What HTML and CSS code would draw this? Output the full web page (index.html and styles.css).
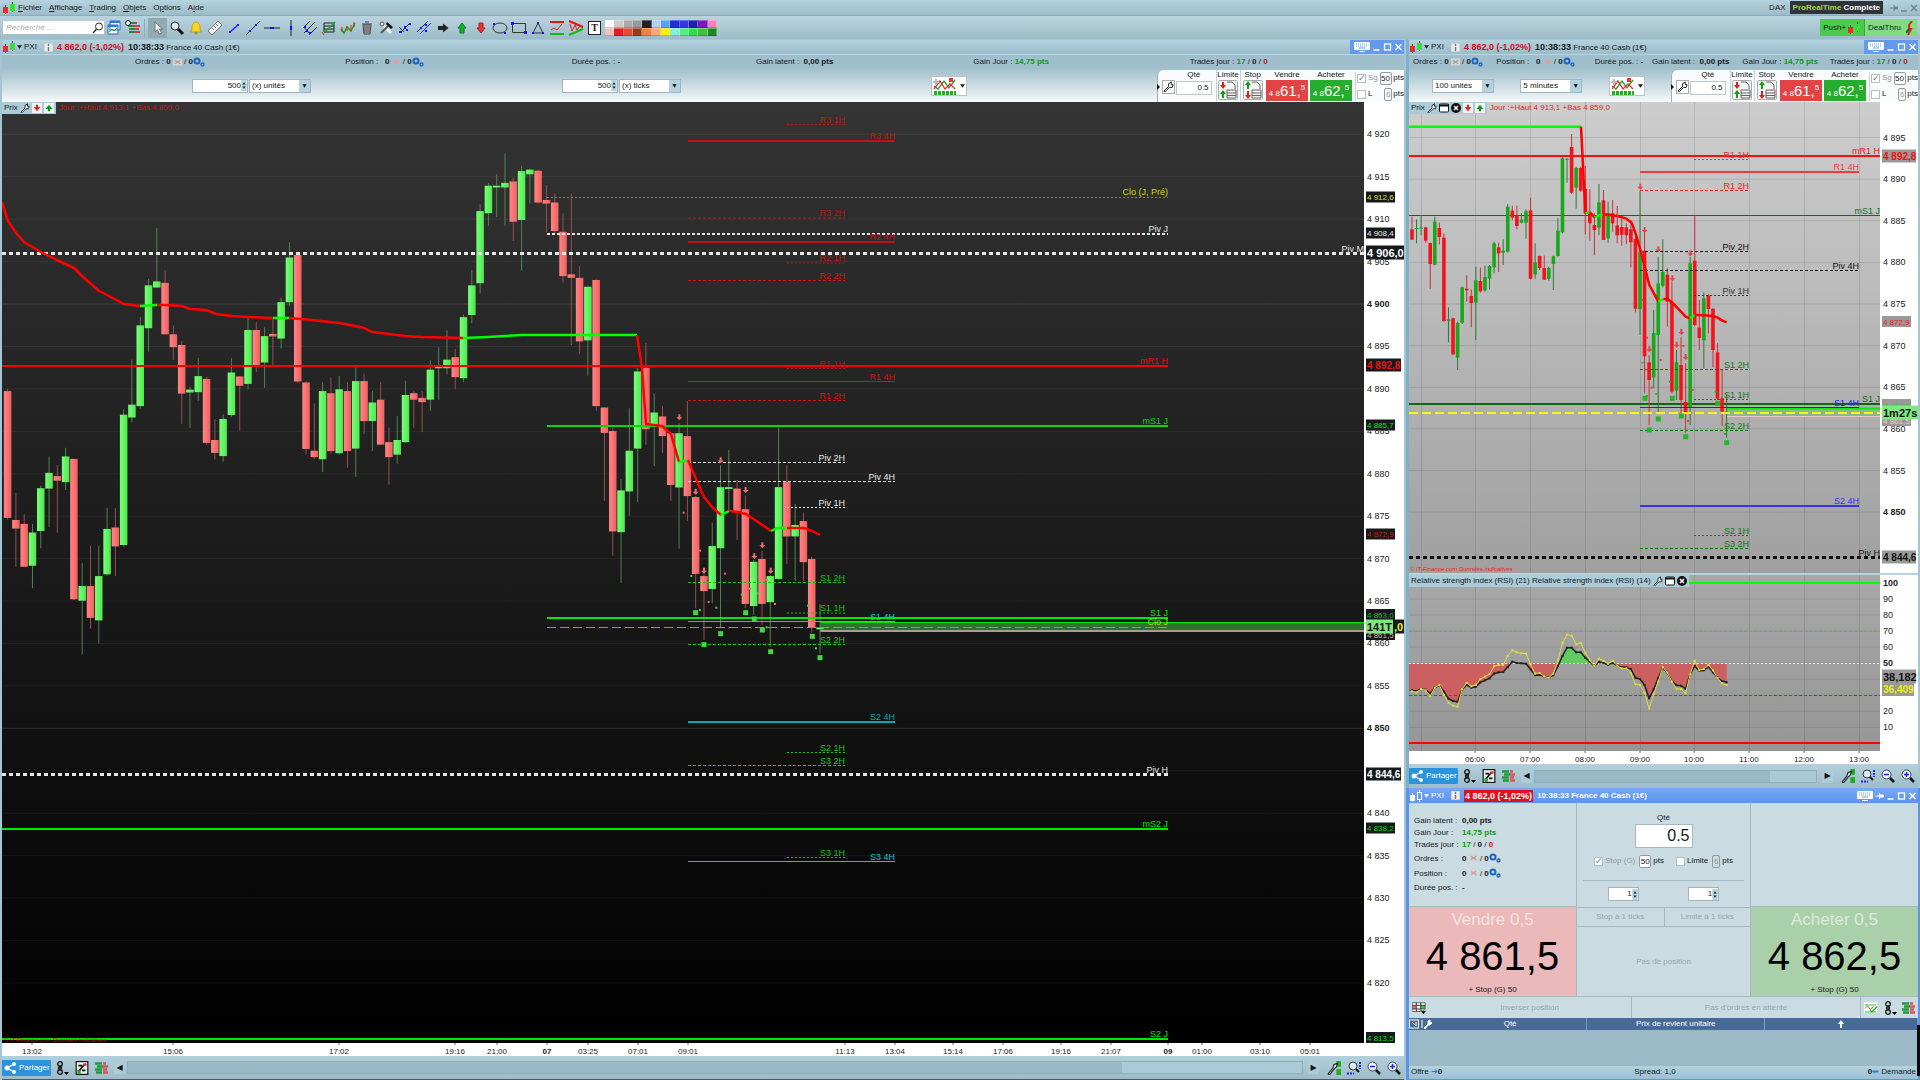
FILE: index.html
```html
<!DOCTYPE html>
<html lang="fr">
<head>
    <meta charset="UTF-8">
    <meta name="viewport" content="width=device-width, initial-scale=1.0">
    <title>ProRealTime Complete</title>
    <link rel="stylesheet" href="styles.css">
</head>
<body>
    <svg class="sprite" aria-hidden="true">
        <symbol id="candles" viewBox="0 0 14 12">
            <path d="M3.500 3v9M10.500 0v10" stroke="#345" fill="none"/>
            <rect x="1" y="5" width="5" height="6" fill="#e03030"/>
            <rect x="8" y="2" width="5" height="7" fill="#38e038"/>
        </symbol>
        <symbol id="candles-white" viewBox="0 0 14 12">
            <path d="M3.500 3v9M10.500 0v2M10.500 9v3" stroke="#fff" fill="none"/>
            <rect x="1" y="5" width="5" height="6" fill="#fff"/>
            <rect x="8.500" y="2.500" width="4" height="7" fill="none" stroke="#fff"/>
        </symbol>
        <symbol id="caret" viewBox="0 0 6 4"><path d="M0 0h6l-3 4z" fill="currentColor"/></symbol>
        <symbol id="info" viewBox="0 0 9 9">
            <rect width="9" height="9" fill="#eee" stroke="#bbb"/>
            <path d="M4.500 1v2M4.500 4v4" stroke="#777" stroke-width="1.500"/>
        </symbol>
        <symbol id="keyboard" viewBox="0 0 16 10">
            <rect width="16" height="8" rx="1" fill="#fff"/>
            <path d="M2 2h12M2 4h12" stroke="#6c9bea" stroke-dasharray="1 1"/>
            <path d="M5 6h6M6 9.500h4" stroke="#6c9bea"/><path d="M5 9.500h6" stroke="#fff"/>
        </symbol>
        <symbol id="min" viewBox="0 0 8 8"><path d="M1 7h6" stroke="currentColor" stroke-width="1.500"/></symbol>
        <symbol id="max" viewBox="0 0 8 8"><rect x="1" y="1" width="6" height="6" fill="none" stroke="currentColor" stroke-width="1.300"/></symbol>
        <symbol id="close" viewBox="0 0 8 8"><path d="M1 1l6 6M7 1l-6 6" stroke="currentColor" stroke-width="1.500"/></symbol>
        <symbol id="pin" viewBox="0 0 8 8"><path d="M0 4h4M4 1v6M4 3h4v2h-4" stroke="currentColor" fill="currentColor"/></symbol>
        <symbol id="cross" viewBox="0 0 10 8">
            <rect width="10" height="8" rx="1" fill="#d8d4d0"/>
            <path d="M2 2l6 4M8 2l-6 4" stroke="#a9a09b" stroke-width="1.500"/>
        </symbol>
        <symbol id="cross-red" viewBox="0 0 10 8"><path d="M2 2l6 4M8 2l-6 4" stroke="#e3a0a4" stroke-width="2"/></symbol>
        <symbol id="gears" viewBox="0 0 12 10">
            <circle cx="4" cy="4" r="2.500" fill="none" stroke="#1c63c8" stroke-width="2"/>
            <circle cx="9.500" cy="7.500" r="1.500" fill="none" stroke="#1c63c8" stroke-width="1.300"/>
        </symbol>
        <symbol id="wrench" viewBox="0 0 12 12">
            <path d="M1 11l5-5V3l3-2v3h2l-1 3H7l-5 5z" fill="#fff" stroke="#111"/>
        </symbol>
        <symbol id="indicators" viewBox="0 0 24 18">
            <rect width="24" height="18" fill="#fff"/>
            <path d="M1 9l4 3 6-8 5 7 6-8" stroke="#2a9a2a" stroke-width="1.300" fill="none"/>
            <path d="M1 12l6-8 5 8 5-5 5 5" stroke="#d33" stroke-width="1.300" fill="none"/>
            <path d="M1 16h22" stroke="#1db31d" stroke-width="4" stroke-dasharray="3 1"/>
            <path d="M16 1h4v4h-4z" fill="#e33"/><path d="M3 2v6M0 5h6" stroke="#bbb" stroke-width="2"/>
        </symbol>
        <symbol id="order-limit" viewBox="0 0 20 20">
            <rect x=".5" y=".5" width="19" height="19" rx="1" fill="#f4f4f4" stroke="#aaa"/>
            <path d="M9 2h5l3 3v4M9 10h9v8h-9zM9 13h9M9 15.500h9" fill="none" stroke="#666"/>
            <path d="M4 2h2v3h2l-3 4-3-4h2z" fill="#e02020"/><path d="M4 18h2v-4h2l-3-4-3 4h2z" fill="#12a012"/>
        </symbol>
        <symbol id="order-stop" viewBox="0 0 20 20">
            <rect x=".5" y=".5" width="19" height="19" rx="1" fill="#f4f4f4" stroke="#aaa"/>
            <path d="M9 2h5l3 3v4M9 10h9v8h-9zM9 13h9M9 15.500h9" fill="none" stroke="#666"/>
            <path d="M4 9h2V5h2L5 1 2 5h2z" fill="#12a012"/><path d="M4 11h2v4h2l-3 4-3-4h2z" fill="#e02020"/>
        </symbol>
        <symbol id="down-box" viewBox="0 0 9 9"><rect width="9" height="9" fill="#f2f2f2"/><path d="M3.500 1.500h2v2H7.500l-3 4-3-4h2z" fill="#e22"/></symbol>
        <symbol id="up-box" viewBox="0 0 9 9"><rect width="9" height="9" fill="#f2f2f2"/><path d="M3.500 7.500h2v-2h2l-3-4-3 4h2z" fill="#0a9a1a"/></symbol>
        <symbol id="window" viewBox="0 0 10 9"><rect x=".5" y=".5" width="9" height="8" rx="1" fill="#fff" stroke="#111"/><path d="M0 2h10" stroke="#111" stroke-width="2"/></symbol>
        <symbol id="kill" viewBox="0 0 10 10"><circle cx="5" cy="5" r="5" fill="#111"/><path d="M3 3l4 4M7 3l-4 4" stroke="#fff" stroke-width="1.500"/></symbol>
        <symbol id="share" viewBox="0 0 12 12"><path d="M10 2L3 6l7 4" fill="none" stroke="#fff" stroke-width="1.300"/><g fill="#fff"><circle cx="10" cy="2" r="2"/><circle cx="3" cy="6" r="2.500"/><circle cx="10" cy="10" r="2"/></g></symbol>
        <symbol id="chain" viewBox="0 0 14 14">
            <path d="M5 4v6" stroke="#111"/><g fill="none" stroke="#111" stroke-width="1.300"><circle cx="5" cy="3" r="2.300"/><circle cx="5" cy="11" r="2.300"/><circle cx="5" cy="7" r="1.500"/></g>
            <path d="M9 11h5l-2.500 3z"/>
        </symbol>
        <symbol id="note" viewBox="0 0 12 12"><rect x="1" y=".5" width="10" height="11" fill="#eee" stroke="#111"/><path d="M3 9l5-6M3 4h3M6 8h3" stroke="#111" stroke-width="1.500"/><path d="M7 2h3v2H7z" fill="#d33"/><path d="M2 8h3v3H2z" fill="#2a2"/></symbol>
        <symbol id="book" viewBox="0 0 14 12">
            <path d="M0 1.500h7M2 4.500h6M0 7.500h7M1 10.500h6" stroke="#1f9a3a" stroke-width="2.500"/>
            <path d="M8 1.500h3M8 4.500h5M8 7.500h4M8 10.500h5" stroke="#e0505a" stroke-width="2.500"/>
        </symbol>
        <symbol id="tool-chart" viewBox="0 0 12 12"><rect x="8" width="4" height="5" fill="#2a2"/><rect x="8" y="7" width="4" height="5" fill="#2a2"/><path d="M1 11l4-5 1-3 3-1-1 3-2 2-4 5z" fill="#eee" stroke="#222"/></symbol>
        <symbol id="zoom-fit" viewBox="0 0 14 14"><circle cx="6" cy="5" r="4" fill="#dceef5" stroke="#333"/><path d="M9 8l3 3" stroke="#111" stroke-width="2"/><path d="M0 12.500h7M13 1v7" stroke="#22e" stroke-width="2" stroke-dasharray="2 1"/></symbol>
        <symbol id="zoom-out" viewBox="0 0 14 14"><circle cx="5.500" cy="5.500" r="4.500" fill="#e6f4fa" stroke="#444"/><path d="M3 5.500h5" stroke="#22e" stroke-width="1.500"/><path d="M9 9l4 4" stroke="#111" stroke-width="2.500"/></symbol>
        <symbol id="zoom-in" viewBox="0 0 14 14"><circle cx="5.500" cy="5.500" r="4.500" fill="#e6f4fa" stroke="#444"/><path d="M3 5.500h5M5.500 3v5" stroke="#22e" stroke-width="1.500"/><path d="M9 9l4 4" stroke="#111" stroke-width="2.500"/></symbol>
        <symbol id="grid" viewBox="0 0 16 14">
            <g stroke="#333" stroke-width=".8"><path d="M0 1h5v3H0zM5 1h5v3H5zM10 1h5v3h-5zM0 8h5v3H0zM5 8h5v3H5z" fill="#fff"/><path d="M0 4h5v4H0z" fill="#e66"/><path d="M5 4h5v4H5z" fill="#eee"/><path d="M10 4h5v4h-5z" fill="#3c3"/></g>
            <path d="M10 10h6l-3 4z"/>
        </symbol>
        <symbol id="wave" viewBox="0 0 16 13"><rect width="15" height="12" fill="#fff"/><path d="M1 7l3-3 3 4 4-3" stroke="#d33" fill="none"/><path d="M1 3h13M1 11h13" stroke="#1b1"/><path d="M7 9l2 2 6-6" stroke="#1b1" stroke-width="1.500" fill="none"/></symbol>
        <symbol id="spin" viewBox="0 0 5 10"><rect width="5" height="10" fill="#b9d3de"/><path d="M1 4l1.500-2L4 4zM1 6l1.500 2L4 6z" fill="#123"/></symbol>
    </svg>

    <header>
        <nav class="menubar">
            <svg class="app-icon"><use href="#candles"/></svg>
            <a href="#"><u>F</u>ichier</a>
            <a href="#"><u>A</u>ffichage</a>
            <a href="#"><u>T</u>rading</a>
            <a href="#"><u>O</u>bjets</a>
            <a href="#">O<u>p</u>tions</a>
            <a href="#">A<u>i</u>de</a>
            <span class="account">DAX</span>
            <span class="brand"><em>ProRealTime</em> Complete</span>
            <span class="app-controls">
                <svg><use href="#pin"/></svg>
                <svg><use href="#min"/></svg>
                <svg><use href="#close"/></svg>
            </span>
        </nav>

        <div class="toolbar">
            <label class="search">
                <input type="search" placeholder="Recherche ..." aria-label="Recherche">
                <svg viewBox="0 0 12 12"><circle cx="7" cy="4.500" r="3.500" fill="none" stroke="#333"/><path d="M4.500 7L1 11" stroke="#333" stroke-width="1.500"/></svg>
            </label>
            <div class="tools">
                <button aria-label="Fenêtres"><svg viewBox="0 0 16 16"><path d="M4 1h10v9H4zM2 5h10v9H2z" fill="#fff" stroke="#2a62c4"/><path d="M4 2h10M2 6h10" stroke="#2a7be0" stroke-width="2"/><path d="M3 12l3-3 2 2 3-3" stroke="#1a1" fill="none"/></svg></button>
                <button aria-label="Carnet"><svg viewBox="0 0 16 16"><path d="M4 3h5M3 6h6M4 9h5M4 12h5" stroke="#1f8a3a" stroke-width="2"/><path d="M9 3h3M9 6h6M9 9h5M9 12h6" stroke="#c9404a" stroke-width="2"/><circle cx="3" cy="3" r="2.500" fill="#eee" stroke="#222"/></svg></button>
                <span class="divider"></span>
                <button class="pressed" aria-label="Curseur"><svg viewBox="0 0 16 16"><path d="M5 2v10l2.500-2 2 4 2-1-2-4h3z" fill="#eee" stroke="#777"/></svg></button>
                <button aria-label="Zoom"><svg viewBox="0 0 16 16"><circle cx="6" cy="6" r="4" fill="#dceef5" stroke="#222"/><path d="M9 9l5 5" stroke="#111" stroke-width="3"/></svg></button>
                <button aria-label="Alerte"><svg viewBox="0 0 16 16"><path d="M2 12c2-1 2-3 2-5 0-3 2-5 4-5s4 2 4 5c0 2 0 4 2 5z" fill="#f7d81e" stroke="#b08a10" stroke-width=".7"/><circle cx="8" cy="13" r="1.500" fill="#b08a10"/></svg></button>
                <button aria-label="Règle"><svg viewBox="0 0 16 16"><path d="M1 11L11 1l4 4L5 15z" fill="#f6f6f6" stroke="#777"/><path d="M5 8l2 2M7 6l2 2M9 4l2 2" stroke="#777"/></svg></button>
                <button aria-label="Segment"><svg viewBox="0 0 16 16"><path d="M4 12l8-7" stroke="#22f" stroke-width="1.500"/><path d="M3 11h2v2H3zM11 4h2v2h-2z" fill="#11f"/></svg></button>
                <button aria-label="Droite"><svg viewBox="0 0 16 16"><path d="M1 15L15 1" stroke="#222"/><path d="M4 10h2v2H4zM10 4h2v2h-2z" fill="#11f"/></svg></button>
                <button aria-label="Horizontale"><svg viewBox="0 0 16 16"><path d="M0 8h16" stroke="#222"/><path d="M6 7h4v2H6z" fill="#11f"/></svg></button>
                <button aria-label="Verticale"><svg viewBox="0 0 16 16"><path d="M8 0v16" stroke="#222"/><path d="M7 6h2v4H7z" fill="#11f"/></svg></button>
                <button aria-label="Fourche"><svg viewBox="0 0 16 16"><path d="M1 8l7-7M2 13L13 2M7 15l8-8M2 7l6 7" stroke="#222"/><path d="M2 6h2v2H2zM4 10h2v2H4zM7 12h2v2H7z" fill="#11f"/></svg></button>
                <button aria-label="Fibonacci"><svg viewBox="0 0 16 16"><path d="M3 3h10v9H3zM3 6h10M3 9h10" stroke="#222" fill="none"/><path d="M3 13L14 2" stroke="#1a1" stroke-width="1.500"/><path d="M1 12l2 3" stroke="#d22"/></svg></button>
                <button aria-label="Vagues"><svg viewBox="0 0 16 16"><path d="M1 9l3 4 3-6 4 4 4-8" fill="none" stroke="#1a1" stroke-width="1.500"/><path d="M2 7v5M7 6v5M11 5v6M14 2v5" stroke="#d22"/></svg></button>
                <button aria-label="Corbeille"><svg viewBox="0 0 16 16"><path d="M4 5h8l-1 9H5z" fill="#bbb" stroke="#444"/><path d="M3 4h10M6 2h4M6 6v7M8 6v7M10 6v7" stroke="#444"/></svg></button>
                <button aria-label="Outils"><svg viewBox="0 0 16 16"><path d="M3 3l10 10" stroke="#eee" stroke-width="3"/><path d="M3 13l8-8" stroke="#555" stroke-width="2"/><path d="M9 2l6 5-2 2-5-5z" fill="#111"/><circle cx="4" cy="4" r="2" fill="#ddd" stroke="#555"/></svg></button>
                <button aria-label="Dupliquer"><svg viewBox="0 0 16 16"><path d="M2 7l5 5M4 12l9-9" stroke="#222"/><path d="M2 11h3v2H2zM7 6h2v3H7zM12 3h2v2h-2zM9 9h2v2H9z" fill="#11f"/></svg></button>
                <button aria-label="Parallèle"><svg viewBox="0 0 16 16"><path d="M1 12L12 1" stroke="#222"/><path d="M4 14L15 3" stroke="#22f"/><path d="M4 7h2v2H4zM9 10h2v2H9zM9 4h2v2H9z" fill="#11f"/></svg></button>
                <button aria-label="Droite"><svg viewBox="0 0 16 16"><path d="M3 6h5V3.500l5.500 4.500L8 12.500V10H3z" fill="#222"/></svg></button>
                <button aria-label="Haut"><svg viewBox="0 0 16 16"><path d="M6 13V8H4l4-5 4 5h-2v5z" fill="#15b52a" stroke="#0a7a18"/></svg></button>
                <button aria-label="Bas"><svg viewBox="0 0 16 16"><path d="M6 3v5H4l4 5 4-5h-2V3z" fill="#ee3535" stroke="#b01818"/></svg></button>
                <button aria-label="Ellipse"><svg viewBox="0 0 16 16"><ellipse cx="8" cy="8" rx="7" ry="5" fill="none" stroke="#333"/><path d="M1 3h2v2H1zM12 12h2v2h-2z" fill="#11f"/></svg></button>
                <button aria-label="Rectangle"><svg viewBox="0 0 16 16"><path d="M1.500 3.500h13v9h-13z" fill="none" stroke="#333"/><path d="M0 2h3v3H0zM13 11h3v3h-3z" fill="#11f"/></svg></button>
                <button aria-label="Triangle"><svg viewBox="0 0 16 16"><path d="M8 3L3 13h10z" fill="none" stroke="#333"/><path d="M7 2h2v2H7zM2 12h2v2H2zM12 12h2v2h-2z" fill="#11f"/></svg></button>
                <button aria-label="Range"><svg viewBox="0 0 16 16"><path d="M1 2h14" stroke="#e11" stroke-width="2"/><path d="M1 14h14" stroke="#1b1" stroke-width="2"/><path d="M2 10l3-2 3 2 5-6" fill="none" stroke="#d22"/></svg></button>
                <button aria-label="Figures"><svg viewBox="0 0 16 16"><path d="M1 1l14 6" stroke="#e11" stroke-width="2"/><path d="M1 15l14-6" stroke="#1b1" stroke-width="2"/><path d="M2 4l2 7 3-6 2 5 3-4 3 2" fill="none" stroke="#d22"/></svg></button>
                <button class="text-tool" aria-label="Texte">T</button>
            </div>
            <div class="palette" id="palette"></div>
            <button class="push">Push+ <svg><use href="#candles"/></svg></button>
            <button class="dealthru">DealThru <svg viewBox="0 0 8 14"><path d="M6 0L3 4v4h2L2 14" fill="none" stroke="#d22" stroke-width="2"/><path d="M3 8L0 12" stroke="#161" stroke-width="2"/></svg></button>
        </div>
    </header>

    <main>
        <section class="window main-window">
            <div class="titlebar">
                <svg class="app-icon"><use href="#candles"/></svg>
                <svg class="caret"><use href="#caret"/></svg>
                <span>PXI</span>
                <svg class="info"><use href="#info"/></svg>
                <b class="loss">4 862,0 (-1,02%)</b>
                <span><b>10:38:33</b> France 40 Cash (1€)</span>
                <span class="controls"><svg class="kb"><use href="#keyboard"/></svg><svg><use href="#min"/></svg><svg><use href="#max"/></svg><svg><use href="#close"/></svg></span>
            </div>
            <div class="stats">
                <span>Ordres : <b>0</b> <svg class="x"><use href="#cross"/></svg> / <b>0</b><svg class="gear"><use href="#gears"/></svg></span>
                <span>Position : &nbsp; <b>0</b> <svg class="x"><use href="#cross-red"/></svg> / <b>0</b><svg class="gear"><use href="#gears"/></svg></span>
                <span>Durée pos. : <b>-</b></span>
                <span>Gain latent : &nbsp;<b>0,00 pts</b></span>
                <span>Gain Jour : <b class="gain">14,75 pts</b></span>
                <span>Trades jour : <b class="gain">17</b> / <b>0</b> / <b class="loss">0</b></span>
            </div>
            <div class="settings">
                <div class="setting">
                    <span class="number"><input type="number" value="500" aria-label="Nombre d'unités"><svg><use href="#spin"/></svg></span>
                    <span class="select"><select aria-label="Unités"><option>(x) unités</option></select></span>
                </div>
                <div class="setting">
                    <span class="number"><input type="number" value="500" aria-label="Nombre de ticks"><svg><use href="#spin"/></svg></span>
                    <span class="select"><select aria-label="Période"><option>(x) ticks</option></select></span>
                </div>
                <button class="indicator" aria-label="Indicateurs"><svg class="ind"><use href="#indicators"/></svg><svg class="caret"><use href="#caret"/></svg></button>
                <div class="trade">
                    <button class="tool" aria-label="Réglages"><svg><use href="#wrench"/></svg></button>
                    <label class="col qty">Qté<input type="text" value="0.5"></label>
                    <button class="col order">Limite<svg><use href="#order-limit"/></svg></button>
                    <button class="col order">Stop<svg><use href="#order-stop"/></svg></button>
                    <button class="col deal">Vendre<span class="sell"><small>4 8</small>61,<sup>5</sup></span></button>
                    <button class="col deal">Acheter<span class="buy"><small>4 8</small>62,<sup>5</sup></span></button>
                    <div class="limits">
                        <div><label class="muted"><input type="checkbox" checked disabled>Sg</label><input type="text" value="50" aria-label="Stop pts">pts</div>
                        <div><label><input type="checkbox">L</label><input type="text" value="6" disabled aria-label="Limite pts">pts</div>
                    </div>
                </div>
            </div>
            <div class="chart">
                <svg id="mainChart"></svg>
                <div class="legend"><span class="legend-bar">Prix <svg><use href="#wrench"/></svg><svg><use href="#down-box"/></svg><svg><use href="#up-box"/></svg></span><span class="dayrange">Jour :+Haut 4 913,1 +Bas 4 859,0</span></div>
            </div>
            <div class="bottombar">
                <button class="share"><svg><use href="#share"/></svg>Partager</button>
                <svg class="ico"><use href="#chain"/></svg>
                <svg class="ico"><use href="#note"/></svg>
                <svg class="ico"><use href="#book"/></svg>
                <button class="scroll-btn">&#9664;</button>
                <div class="track"><div class="thumb thumb-wide"></div></div>
                <button class="scroll-btn">&#9654;</button>
                <svg class="ico"><use href="#tool-chart"/></svg>
                <svg class="ico"><use href="#zoom-fit"/></svg>
                <svg class="ico"><use href="#zoom-out"/></svg>
                <svg class="ico"><use href="#zoom-in"/></svg>
            </div>
        </section>

        <div class="side">
            <section class="window side-window">
                <div class="titlebar">
                    <svg class="app-icon"><use href="#candles"/></svg>
                    <svg class="caret"><use href="#caret"/></svg>
                    <span>PXI</span>
                    <svg class="info"><use href="#info"/></svg>
                    <b class="loss">4 862,0 (-1,02%)</b>
                    <span><b>10:38:33</b> France 40 Cash (1€)</span>
                    <span class="controls"><svg class="kb"><use href="#keyboard"/></svg><svg><use href="#min"/></svg><svg><use href="#max"/></svg><svg><use href="#close"/></svg></span>
                </div>
                <div class="stats">
                    <span>Ordres : <b>0</b> <svg class="x"><use href="#cross"/></svg> / <b>0</b><svg class="gear"><use href="#gears"/></svg></span>
                    <span>Position : &nbsp; <b>0</b> <svg class="x"><use href="#cross-red"/></svg> / <b>0</b><svg class="gear"><use href="#gears"/></svg></span>
                    <span>Durée pos. : <b>-</b></span>
                    <span>Gain latent : &nbsp;<b>0,00 pts</b></span>
                    <span>Gain Jour : <b class="gain">14,75 pts</b></span>
                    <span>Trades jour : <b class="gain">17</b> / <b>0</b> / <b class="loss">0</b></span>
                </div>
                <div class="settings">
                    <span class="select"><select aria-label="Unités"><option>100 unités</option></select></span>
                    <span class="select"><select aria-label="Période"><option>5 minutes</option></select></span>
                    <button class="indicator" aria-label="Indicateurs"><svg class="ind"><use href="#indicators"/></svg><svg class="caret"><use href="#caret"/></svg></button>
                    <div class="trade">
                        <button class="tool" aria-label="Réglages"><svg><use href="#wrench"/></svg></button>
                        <label class="col qty">Qté<input type="text" value="0.5"></label>
                        <button class="col order">Limite<svg><use href="#order-limit"/></svg></button>
                        <button class="col order">Stop<svg><use href="#order-stop"/></svg></button>
                        <button class="col deal">Vendre<span class="sell"><small>4 8</small>61,<sup>5</sup></span></button>
                        <button class="col deal">Acheter<span class="buy"><small>4 8</small>62,<sup>5</sup></span></button>
                        <div class="limits">
                            <div><label class="muted"><input type="checkbox" checked disabled>Sg</label><input type="text" value="50" aria-label="Stop pts">pts</div>
                            <div><label><input type="checkbox">L</label><input type="text" value="6" disabled aria-label="Limite pts">pts</div>
                        </div>
                    </div>
                </div>
                <div class="chart">
                    <svg id="sideChart"></svg>
                    <div class="legend"><span class="legend-bar">Prix <svg><use href="#wrench"/></svg><svg><use href="#window"/></svg><svg><use href="#kill"/></svg><svg><use href="#down-box"/></svg><svg><use href="#up-box"/></svg></span><span class="dayrange">Jour :+Haut 4 913,1 +Bas 4 859,0</span></div>
                </div>
                <div class="chart rsi">
                    <svg id="rsiChart"></svg>
                    <div class="legend"><span class="legend-bar">Relative strength index (RSI) (21) Relative strength index (RSI) (14) <svg><use href="#wrench"/></svg><svg><use href="#window"/></svg><svg><use href="#kill"/></svg></span></div>
                </div>
                <div class="bottombar">
                    <button class="share"><svg><use href="#share"/></svg>Partager</button>
                    <svg class="ico"><use href="#chain"/></svg>
                    <svg class="ico"><use href="#note"/></svg>
                    <svg class="ico"><use href="#book"/></svg>
                    <button class="scroll-btn">&#9664;</button>
                    <div class="track"><div class="thumb"></div></div>
                    <button class="scroll-btn">&#9654;</button>
                    <svg class="ico"><use href="#tool-chart"/></svg>
                    <svg class="ico"><use href="#zoom-fit"/></svg>
                    <svg class="ico"><use href="#zoom-out"/></svg>
                    <svg class="ico"><use href="#zoom-in"/></svg>
                </div>
            </section>

            <section class="window ticket">
                <div class="titlebar">
                    <svg class="app-icon"><use href="#candles-white"/></svg>
                    <svg class="caret"><use href="#caret"/></svg>
                    <span>PXI</span>
                    <svg class="info"><use href="#info"/></svg>
                    <b class="price-flag">4 862,0 (-1,02%)</b>
                    <strong>10:38:33 France 40 Cash (1€)</strong>
                    <span class="controls"><svg class="kb"><use href="#keyboard"/></svg><svg><use href="#pin"/></svg><svg><use href="#min"/></svg><svg><use href="#max"/></svg><svg><use href="#close"/></svg></span>
                </div>
                <div class="ticket-grid">
                    <dl class="summary">
                        <dt>Gain latent :</dt><dd><b>0,00 pts</b></dd>
                        <dt>Gain Jour :</dt><dd><b class="gain">14,75 pts</b></dd>
                        <dt>Trades jour :</dt><dd><b class="gain">17</b> / <b>0</b> / <b class="loss">0</b></dd>
                        <dt>Ordres :</dt><dd><b>0</b> <svg class="x"><use href="#cross"/></svg> / <b>0</b><svg class="gear"><use href="#gears"/></svg></dd>
                        <dt>Position :</dt><dd><b>0</b> <svg class="x"><use href="#cross-red"/></svg> / <b>0</b><svg class="gear"><use href="#gears"/></svg></dd>
                        <dt>Durée pos. :</dt><dd><b>-</b></dd>
                    </dl>
                    <div class="quantity">
                        <label class="big-qty">Qté<input type="text" value="0.5"></label>
                        <div class="protect">
                            <label class="muted"><input type="checkbox" checked disabled>Stop (G)</label><input type="text" value="50" aria-label="Stop pts">pts
                            <label class="limit"><input type="checkbox">Limite</label><input type="text" value="6" disabled aria-label="Limite pts">pts
                        </div>
                        <div class="offsets">
                            <span class="number"><input type="number" value="1" aria-label="Ticks stop"><svg><use href="#spin"/></svg></span>
                            <span class="number"><input type="number" value="1" aria-label="Ticks limite"><svg><use href="#spin"/></svg></span>
                        </div>
                    </div>
                    <div class="blank"></div>
                    <button class="quote quote-sell"><span>Vendre 0,5</span><strong>4 861,5</strong><small>+ Stop (G) 50</small></button>
                    <div class="middle">
                        <button disabled>Stop à 1 ticks</button>
                        <button disabled>Limite à 1 ticks</button>
                        <p>Pas de position</p>
                    </div>
                    <button class="quote quote-buy"><span>Acheter 0,5</span><strong>4 862,5</strong><small>+ Stop (G) 50</small></button>
                </div>
                <div class="actions">
                    <svg class="ico"><use href="#grid"/></svg>
                    <button class="invert" disabled>Inverser position</button>
                    <button disabled>Pas d'ordres en attente</button>
                    <svg class="ico"><use href="#wave"/></svg>
                    <svg class="ico"><use href="#chain"/></svg>
                    <svg class="ico"><use href="#book"/></svg>
                </div>
                <table>
                    <thead>
                        <tr>
                            <th class="th-icons"><svg viewBox="0 0 24 10"><rect x=".5" y="1" width="9" height="8" fill="none" stroke="#fff"/><path d="M3 3l4 4M7 3v4M13 1v8M15 9l4-4V2l2-1v2l2 1-2 2h-2l-3 4z" stroke="#fff" fill="#fff"/></svg></th>
                            <th>Qté</th>
                            <th class="th-price">Prix de revient unitaire</th>
                            <th><svg class="up" viewBox="0 0 6 8"><path d="M2 8V4H0l3-4 3 4H4v4z" fill="#fff"/></svg></th>
                        </tr>
                    </thead>
                </table>
                <div class="depth"></div>
                <footer>
                    <span>Offre <i>&#10132;</i><b>0</b></span>
                    <span>Spread: 1,0</span>
                    <span><b>0</b><i>&#11013;</i> Demande</span>
                </footer>
            </section>
        </div>
    </main>
    <script src="script.js"></script>
</body>
</html>
```

FILE: styles.css
```css
* {
    box-sizing: border-box;
}

body {
    margin: 0;
    height: 100vh;
    display: flex;
    flex-direction: column;
    overflow: hidden;
    background: #9cbccb;
    color: #15181a;
    font: 8px/12px "Liberation Sans", Arial, sans-serif;
}

button, input, select {
    font: inherit;
    color: inherit;
    margin: 0;
    padding: 0;
    border: 0;
    border-radius: 0;
    background: none;
}

svg {
    display: block;
    flex: none;
}

a {
    color: inherit;
    text-decoration: none;
}

.sprite {
    position: absolute;
    width: 0;
    height: 0;
}

.gain { color: #0a9d12; }
.loss { color: #d8091c; }
.muted { color: #8e9a9f; }

/* menu and tools */

.menubar {
    display: flex;
    align-items: center;
    gap: 7px;
    height: 16px;
    padding: 0 2px;
    background: linear-gradient(#b6d3de, #9dbcc9);
    border-bottom: 1px solid #8dabb8;
}

.app-icon {
    width: 14px;
    height: 12px;
}

.menubar .app-icon {
    margin-right: -5px;
}

.account {
    margin-left: auto;
}

.brand {
    padding: 0 3px;
    margin-left: -3px;
    background: #2e3438;
    color: #fff;
    font-weight: bold;
    line-height: 13px;
}

.brand em {
    color: #a6d838;
    font-style: normal;
}

.app-controls {
    display: flex;
    gap: 2px;
    color: #6d8792;
}

.app-controls svg {
    width: 8px;
    height: 8px;
}

.toolbar {
    display: flex;
    align-items: center;
    height: 23px;
    padding: 0 3px;
    background: linear-gradient(#b9d4df, #9dbbc8);
}

.search {
    display: flex;
    align-items: center;
    width: 101px;
    height: 13px;
    background: #fff;
}

.search input {
    flex: 1;
    min-width: 0;
    outline: 0;
    font-style: italic;
    padding-left: 3px;
    appearance: none;
}

.search input::placeholder {
    color: #aaa;
}

.search svg {
    width: 12px;
    height: 12px;
}

.tools {
    display: flex;
    align-items: center;
    height: 20px;
}

.tools button {
    width: 19px;
    height: 20px;
    display: grid;
    place-items: center;
}

.tools svg {
    width: 16px;
    height: 16px;
}

.tools .pressed {
    background: #8fa9b5;
}

.divider {
    width: 1px;
    height: 18px;
    margin: 0 3px 0 2px;
    background: #8fa9b5;
}

.tools .text-tool {
    width: 13px;
    height: 14px;
    margin: 0 4px 0 3px;
    border: 1px solid #222;
    background: #fff;
    font: bold 10px/12px "Liberation Serif", serif;
}

.palette {
    display: grid;
    grid-template-columns: repeat(12, 1fr);
    grid-auto-rows: 8px;
    width: 112px;
}

.palette span {
    border: 1px solid rgba(255, 255, 255, .3);
    border-left: 0;
    border-bottom-color: rgba(0, 0, 0, .2);
}

.push, .dealthru {
    display: flex;
    align-items: center;
    gap: 1px;
    height: 17px;
    padding: 0 3px;
    background: #4acb4d;
}

.push {
    margin-left: auto;
    border-right: 1px solid #3aa43f;
}

.push svg {
    width: 14px;
    height: 12px;
}

.dealthru {
    gap: 5px;
    background: #7fdc80;
}

.dealthru svg {
    width: 8px;
    height: 14px;
}

/* windows */

main {
    flex: 1;
    min-height: 0;
    display: grid;
    grid-template-columns: 1fr 514px;
}

.side {
    min-height: 0;
    display: flex;
    flex-direction: column;
}

.window {
    display: flex;
    flex-direction: column;
    min-height: 0;
    border: solid #a4c6d4;
    border-width: 1px 2px 0;
}

.side-window {
    border-left-color: #7fb0c6;
    border-left-width: 3px;
    flex: 1;
}

.titlebar {
    display: flex;
    align-items: center;
    height: 14px;
    background: linear-gradient(#b3d2de, #9bbcc9);
}

.titlebar > * {
    margin-right: 4px;
}

.titlebar b {
    font-size: 9px;
}

.titlebar .app-icon {
    margin-right: 1px;
}

.titlebar .caret {
    margin-right: 2px;
}

.caret {
    width: 5px;
    height: 4px;
}

.info {
    width: 9px;
    height: 9px;
    margin: 0 4px 0 3px;
}

.titlebar .controls {
    display: flex;
    align-items: center;
    gap: 2px;
    height: 14px;
    margin: 0 0 0 auto;
    padding: 0 1px 0 4px;
    background: #6399ef;
    color: #fff;
}

.controls svg {
    width: 9px;
    height: 8px;
}

.controls .kb {
    width: 16px;
    height: 10px;
}

.stats {
    display: grid;
    align-items: center;
    height: 15px;
    background: #9fbfcc;
    border-top: 1px solid #b9d6e1;
    white-space: nowrap;
}

.main-window .stats {
    grid-template-columns: 210fr 226fr 184fr 217fr 216fr 214fr;
    padding-left: 133px;
}

.side-window .stats {
    grid-template-columns: 83fr 98fr 57fr 90fr 87fr 88fr;
    padding-left: 4px;
}

.stats svg, .summary svg {
    display: inline-block;
    vertical-align: middle;
}

.x {
    width: 9px;
    height: 8px;
}

.gear {
    width: 12px;
    height: 10px;
}

.settings {
    align-items: center;
    height: 33px;
    background: linear-gradient(#a3c0cc, #dbe7ec 70%, #f6fafb);
}

.main-window .settings {
    display: grid;
    grid-template-columns: 370fr 369fr 226fr 247px;
    justify-items: start;
    padding-left: 190px;
}

.side-window .settings {
    display: flex;
    justify-content: space-between;
    padding-left: 23px;
}

.setting {
    display: flex;
    gap: 1px;
}

.number {
    display: flex;
    align-items: center;
    width: 56px;
    height: 14px;
    background: #fff;
    border: 1px solid #9fb6c1;
}

.number input {
    flex: 1;
    min-width: 0;
    text-align: right;
    appearance: textfield;
    -moz-appearance: textfield;
}

.number input::-webkit-inner-spin-button {
    display: none;
}

.number svg {
    width: 6px;
    height: 11px;
}

.select {
    position: relative;
    width: 62px;
    height: 14px;
    background: #fff;
    border: 1px solid #9fb6c1;
}

.select select {
    width: 100%;
    height: 12px;
    padding: 0 12px 0 2px;
    appearance: none;
}

.select::after {
    content: "\25BC";
    position: absolute;
    right: 0;
    top: 0;
    width: 11px;
    font-size: 7px;
    text-align: center;
    background: #b5d2df;
    pointer-events: none;
}

.indicator {
    display: flex;
    align-items: center;
    height: 20px;
    padding: 0 1px;
    gap: 3px;
    background: #fff;
    border: 1px solid #b7c4ca;
}

.ind {
    width: 24px;
    height: 18px;
}

.trade {
    position: relative;
    display: flex;
    align-items: flex-end;
    width: 247px;
    height: 32px;
    padding: 0 0 1px 4px;
    background: #f9fbfc;
    border-left: 1px solid #9db4be;
    border-radius: 6px 0 0 0;
}

.trade::before {
    content: "";
    position: absolute;
    left: -1px;
    top: 14px;
    border: solid transparent;
    border-width: 3px 0 3px 3px;
    border-left-color: #111;
}

.tool {
    width: 13px;
    height: 14px;
    margin-bottom: 7px;
    border: 1px solid #aaa;
}

.tool svg {
    width: 11px;
    height: 11px;
}

.col {
    display: flex;
    flex-direction: column;
    align-items: center;
    height: 31px;
    line-height: 9px;
}

.qty {
    width: 36px;
    margin-left: 1px;
}

.qty input {
    width: 100%;
    height: 14px;
    margin-top: 2px;
    padding-right: 2px;
    text-align: right;
    background: #fff;
    border: 1px solid #bcc6cb;
}

.order {
    width: 24px;
    margin-left: 1px;
    border-left: 1px solid #c3d4dc;
}

.order svg {
    width: 20px;
    height: 20px;
    margin-top: 1px;
}

.qty + .order {
    margin-left: 4px;
}

.deal {
    width: 42px;
    margin-left: 2px;
}

.deal span {
    width: 42px;
    height: 21px;
    margin-top: 1px;
    color: #fff;
    font-size: 15px;
    line-height: 21px;
    white-space: nowrap;
}

.deal small, .deal sup {
    font-size: 8px;
    line-height: 8px;
}

.sell { background: #e24345; }
.buy { background: #27ad2d; }

.limits {
    display: flex;
    flex-direction: column;
    gap: 3px;
    margin-left: 3px;
    padding-left: 1px;
    border-left: 1px solid #c3d4dc;
}

.limits > div {
    display: flex;
    align-items: center;
    justify-content: space-between;
    gap: 1px;
    width: 47px;
}

.limits label, .protect label {
    display: flex;
    align-items: center;
    gap: 2px;
}

input[type="checkbox"] {
    appearance: none;
    width: 9px;
    height: 9px;
    background: #fff;
    border: 1px solid #b4bfc4;
}

input[type="checkbox"]:checked::after {
    content: "\2713";
    display: block;
    color: #777;
    font: bold 9px/7px "DejaVu Sans", sans-serif;
}

.limits input[type="text"], .protect input[type="text"] {
    width: 12px;
    height: 13px;
    text-align: center;
    background: #fff;
    border: 1px solid #8f9ba0;
    border-radius: 2px;
}

.limits input[type="text"]:disabled, .protect input[type="text"]:disabled {
    width: 8px;
    margin-left: auto;
    color: #999;
    background: none;
}

/* charts */

.chart {
    position: relative;
    flex: 1;
    min-height: 0;
    background: #fff;
}

.chart > svg {
    position: absolute;
    width: 100%;
    height: 100%;
    font-size: 9px;
}

.rsi {
    flex: 0 0 191px;
    border-top: 2px solid #b9d3de;
}

.legend {
    position: absolute;
    top: 0;
    left: 0;
    display: flex;
    align-items: center;
    line-height: 12px;
}

.legend-bar {
    display: flex;
    align-items: center;
    gap: 2px;
    height: 12px;
    padding: 0 2px;
    background: #aaccd9;
}

.legend svg {
    width: 10px;
    height: 10px;
}

.dayrange {
    margin-left: 3px;
    color: #d01212;
}

.side-window .dayrange {
    color: #f02020;
}

.bottombar {
    display: flex;
    align-items: center;
    height: 24px;
    padding-right: 3px;
    background: linear-gradient(#b2d0dc, #9dbcc9);
}

.main-window .bottombar {
    border-bottom: 1px solid #4a5a62;
}

.share {
    display: flex;
    align-items: center;
    gap: 3px;
    width: 49px;
    height: 16px;
    padding-left: 2px;
    background: #2b93dc;
    border-radius: 1px;
    color: #fff;
}

.share svg {
    width: 12px;
    height: 12px;
}

.ico {
    width: 14px;
    height: 14px;
    margin-left: 6px;
}

.share + .ico {
    margin-left: 4px;
}

.scroll-btn {
    width: 11px;
    height: 13px;
    margin: 0 2px 0 5px;
    font: 8px/12px "DejaVu Sans", sans-serif;
    background: #aecbd7;
}

.track {
    flex: 1;
    height: 13px;
    background: #9ab8c5;
    border: 1px solid #90aebb;
}

.thumb {
    width: 46px;
    height: 11px;
    margin-left: auto;
    background: #abcad7;
}

.thumb-wide {
    width: 180px;
}

/* order ticket */

.ticket {
    position: relative;
    border-color: #5b93ee;
    border-width: 0 2px 1px 3px;
    background: #cbdbe2;
}

/* screen edge showing beside the depth list */
.ticket::after {
    content: "";
    position: absolute;
    right: -2px;
    bottom: 3px;
    width: 3px;
    height: 51px;
    background: #0a0a0a;
}

.ticket .titlebar {
    height: 15px;
    background: linear-gradient(#78a8f6, #5b93ee);
    color: #fff;
}

.ticket .controls {
    background: none;
}

.price-flag {
    padding: 0 1px;
    background: #e2101c;
}

.ticket-grid {
    display: grid;
    grid-template-columns: 167px 1fr 167px;
    grid-template-rows: 104px 89px;
}

.summary {
    display: grid;
    grid-template-columns: 48px 1fr;
    grid-template-rows: 12px 12px 12px 15px 15px 14px;
    align-items: center;
    margin: 0;
    padding: 12px 0 0 5px;
}

.summary dd {
    margin: 0;
}

.quantity {
    border: solid #a5b9c2;
    border-width: 0 1px;
    padding: 9px 6px 0;
    text-align: center;
}

.big-qty {
    display: flex;
    flex-direction: column;
    align-items: center;
}

.big-qty input {
    width: 58px;
    height: 24px;
    padding-right: 2px;
    background: #fff;
    border: 1px solid #a5b9c2;
    text-align: right;
    font-size: 16px;
}

.protect {
    display: flex;
    align-items: center;
    justify-content: center;
    gap: 2px;
    height: 26px;
}

.protect .limit {
    margin-left: 10px;
}

.protect input[type="text"], .protect input[type="text"]:disabled {
    margin-left: 2px;
}

.offsets {
    display: flex;
    justify-content: space-around;
    margin-top: 6px;
    padding-top: 6px;
    border-top: 1px solid #a5b9c2;
}

.offsets .number {
    width: 31px;
}

.quote {
    display: flex;
    flex-direction: column;
    align-items: center;
    padding-top: 3px;
}

.quote span {
    color: rgba(255, 255, 255, .6);
    font-size: 17px;
    line-height: 19px;
}

.quote strong {
    color: #000;
    font-size: 40px;
    font-weight: normal;
    line-height: 55px;
}

.quote small {
    font-size: 8px;
    line-height: 11px;
}

.quote-sell { background: #ebb9b9; }
.quote-buy { background: #a9d0a9; }

.middle {
    display: grid;
    grid-template-columns: 1fr 1fr;
    grid-template-rows: 19px 1fr;
    border: solid #a5b9c2;
    border-width: 1px 1px 0;
    color: #97a7ae;
}

.middle button {
    border-bottom: 1px solid #a5b9c2;
}

.middle button + button {
    border-left: 1px solid #a5b9c2;
}

.middle p {
    grid-column: 1 / 3;
    margin: auto;
}

.blank, .summary {
    border-bottom: 1px solid #a5b9c2;
}

.actions {
    display: flex;
    align-items: center;
    height: 22px;
    border-top: 1px solid #a5b9c2;
    color: #97a7ae;
}

.actions button {
    flex: 229;
    height: 21px;
    border-right: 1px solid #a5b9c2;
}

.actions .invert {
    flex: 204;
}

.actions .ico {
    margin: 0 2px 0 3px;
}

table {
    width: 100%;
    border-collapse: collapse;
    table-layout: fixed;
    background: #466b99;
    color: #fff;
}

th {
    height: 12px;
    padding: 0;
    font-weight: normal;
    line-height: 10px;
    border-right: 1px solid #7f9abb;
}

th.th-icons {
    width: 25px;
    border: 0;
}

th.th-price {
    width: 178px;
}

.th-icons svg {
    width: 24px;
    height: 10px;
}

.up {
    width: 6px;
    height: 8px;
    margin: auto;
}

.depth {
    height: 36px;
    background: #9bb9c7;
}

footer {
    display: flex;
    justify-content: space-between;
    padding: 0 2px 1px;
    background: linear-gradient(#b4d2de, #9cbfd0);
}

footer i {
    color: #2b80d8;
    font-style: normal;
}
```

FILE: script.js
```js
const NS = 'http://www.w3.org/2000/svg';

function el(parent, name, attrs, text) {
    const node = document.createElementNS(NS, name);
    for (const key in attrs) node.setAttribute(key, attrs[key]);
    if (text !== undefined) node.textContent = text;
    parent.appendChild(node);
    return node;
}

function gradient(svg, id, vertical, stops) {
    const g = el(svg, 'linearGradient', { id, x2: vertical ? 0 : 1, y2: vertical ? 1 : 0 });
    stops.forEach((c, i) => el(g, 'stop', { offset: i / (stops.length - 1), 'stop-color': c }));
}

// direction (g up, r down), then high, top, bottom, low
const mainBars = `r808 815 1170 1175|r1100 1176 1200 1307|r1160 1187 1307 1307|g1187 1211 1304 1367|g1080 1087 1207 1255|g998 1044 1088 1195|r1022 1053 1066 1212|g974 998 1070 1092|r1004 1005 1398 1400|g1296 1361 1402 1552|r1248 1361 1450 1480|g1248 1333 1457 1522|g1142 1201 1328 1332|r1142 1197 1250 1333|g866 881 1246 1250|g727 853 889 902|g608 631 857 865|g502 519 639 705|g358 508 525 525|r477 512 656 656|r631 656 692 728|r675 686 822 907|g803 811 819 918|g722 773 818 842|r775 781 960 965|r893 952 988 1007|g880 893 997 1013|g723 763 882 888|r773 774 800 926|g610 644 795 810|r622 644 744 762|g637 661 735 806|r608 655 662 748|g554 566 668 696|g398 441 566 577|r433 434 788 792|r788 791 977 993|r850 982 1000 1006|g790 815 1006 1042|r777 821 983 990|g773 810 989 993|r790 815 983 1030|g743 787 976 1055|r766 787 899 936|g815 847 899 983|r790 839 965 966|r917 958 1000 1077|g885 952 993 1018|g786 826 958 960|r815 821 839 918|r815 834 846 930|g729 755 839 870|g692 746 751 839|g645 727 751 768|r697 720 776 810|g601 608 779 790|g476 519 602 625|g292 311 513 542|g232 240 317 352|g208 240 245 328|g150 232 245 352|r217 228 341 395|g184 199 336 478|g192 195 208 290|r195 198 287 289|r238 280 290 370|r261 287 367 372|r317 369 493 511|r262 488 498 686|r464 498 676 711|g520 523 673 772|r500 504 857 870|r860 861 932 1122|r915 927 1208 1276|g1061 1093 1210 1352|g863 982 1096 1164|g750 760 976 1126|r680 750 922 965|g822 875 910 1025|r857 886 941 988|r931 933 1078 1123|g905 933 1085 1256|r843 941 1109 1179|r1109 1112 1327 1423|r1325 1333 1375 1512|g1183 1249 1369 1409|g1023 1084 1255 1479|g980 1084 1089 1148|r1064 1088 1152 1232|r1108 1146 1411 1423|g1288 1293 1417 1442|r1262 1285 1411 1470|g1330 1333 1406 1531|g917 1084 1341 1344|r1023 1070 1222 1299|g1131 1190 1222 1346|r1155 1179 1294 1346|r1279 1285 1477 1491|g1411 1477 1482 1549`;

const sideBars = `r650 688 719 719|g658 684 686 730|g645 683 686 706|r680 682 722 728|r728 729 792 866|g650 665 794 796|r668 684 711 733|r700 713 963 966|g922 958 962 1027|r953 955 1063 1066|g965 969 1073 1110|g860 862 968 972|r826 866 871 905|r868 888 909 982|g800 841 908 1020|r803 843 874 878|g797 831 871 875|g795 798 836 868|g725 730 802 820|r728 742 760 816|g718 752 758 795|g612 620 755 758|r617 632 653 660|r617 648 678 688|g640 659 668 670|g628 634 668 716|r593 631 836 838|g730 787 823 836|r767 768 804 810|r767 804 839 840|g800 804 837 842|g767 769 792 870|g655 692 768 770|g472 475 697 700|g475 476 479 548|r402 441 578 582|g500 504 563 626|r500 504 572 575|r498 567 640 703|r568 638 670 722|r640 675 690 766|g552 607 683 705|r570 601 720 720|g605 640 715 728|r600 640 670 695|r618 676 706 730|r655 681 704 737|r670 682 706 733|r660 688 727 802|r700 717 926 937|g572 755 927 1005|r690 752 1069 1178|r1065 1087 1140 1275|g930 999 1132 1165|g770 850 1005 1240|g718 816 857 862|r805 824 905 980|r845 905 1175 1180|g1050 1087 1172 1200|r1012 1095 1200 1240|r1090 1206 1238 1298|g770 790 1222 1275|r647 782 975 978|r900 983 1014 1050|g877 895 1021 1105|r882 886 927 1000|r925 926 1050 1102|r1030 1057 1196 1200|r1108 1195 1235 1278|g1185 1235 1240 1313`;

function candles(g, bars, x0, step, width, y, style) {
    bars.split('|').forEach((bar, i) => {
        const up = bar[0] === 'g';
        const [hi, top, bottom, lo] = bar.slice(1).split(' ').map(v => y(+v));
        const x = x0 + i * step;
        el(g, 'path', { d: `M${x} ${hi}V${lo}`, stroke: up ? style.upWick : style.downWick });
        el(g, 'rect', { x: x - width / 2, y: top, width, height: Math.max(1, bottom - top), fill: up ? style.up : style.down });
    });
}

// level: [y, x1, x2, color, width, dash, label]
function levels(g, list) {
    list.forEach(([y, x1, x2, color, width, dash, label]) => {
        el(g, 'path', { d: `M${x1} ${y}H${x2}`, stroke: color, 'stroke-width': width, 'stroke-dasharray': dash });
        if (label) el(g, 'text', { x: x2, y: Math.round(y) - 2, fill: color, 'text-anchor': 'end' }, label);
    });
}

function lines(g, list, width) {
    list.forEach(([color, points]) => el(g, 'polyline', { points, fill: 'none', stroke: color, 'stroke-width': width, 'stroke-linejoin': 'round' }));
}

function arrows(g, list, color) {
    list.forEach(([x, y]) => el(g, 'path', { d: `M${x - 1} ${y - 3}h2v3h2l-3 3-3-3h2z`, fill: color }));
}

function squares(g, list, color, size) {
    list.forEach(([x, y]) => el(g, 'rect', { x: x - size / 2, y: y - size / 2, width: size, height: size, fill: color }));
}

// tag: [y, text, color, background, font size, bold, width]
function tags(svg, x, list) {
    list.forEach(([y, text, color, bg, size, bold, w]) => {
        el(svg, 'rect', { x: x + 2, y: y - size / 2 - 2, width: w, height: size + 3, fill: bg });
        el(svg, 'text', { x: x + 3, y: y + size / 3, fill: color, 'font-size': size, 'font-weight': bold ? 'bold' : 'normal' }, text);
    });
}

function times(svg, y, list) {
    list.forEach(([x, text]) => {
        el(svg, 'path', { d: `M${x} ${y}v2`, stroke: '#666' });
        el(svg, 'text', { x, y: y + 11, 'text-anchor': 'middle', fill: '#222', 'font-size': 8, 'font-weight': text.length < 3 ? 'bold' : 'normal' }, text);
    });
}

function price(p) {
    return '4 ' + String(p - 4000);
}

function drawMain() {
    const svg = document.getElementById('mainChart');
    const w = svg.clientWidth - 40, h = svg.clientHeight - 13;
    gradient(svg, 'night', true, ['#343434', '#1a1a1a', '#000']);
    gradient(svg, 'upFill', false, ['#78ff78', '#50e850']);
    gradient(svg, 'downFill', false, ['#ff8585', '#f06060']);
    el(svg, 'rect', { width: w, height: h, fill: 'url(#night)' });

    for (let p = 4920; p >= 4820; p -= 5) {
        const y = 32.3 + (4920 - p) * 8.486;
        el(svg, 'path', { d: `M0 ${y}H${w}`, stroke: '#fff', 'stroke-opacity': p % 50 ? .05 : .12 });
        if (p !== 4845) el(svg, 'text', { x: w + 3, y: y + 3, fill: '#222', 'font-weight': p % 50 ? 'normal' : 'bold' }, price(p));
    }

    const red = '#d81010', dim = '#c01212', green = '#00e800', leaf = '#12c812', white = '#e8e8e8';
    const g = el(svg, 'g', {});
    el(g, 'rect', { x: 818, y: 521, width: w - 818, height: 7, fill: '#2f722f' });
    el(g, 'path', { d: `M818 520.500H${w}`, stroke: green, 'stroke-width': 1 });
    el(g, 'path', { d: `M818 529H${w}`, stroke: '#a89c94', 'stroke-width': 2 });

    candles(g, mainBars, 5.600, 8.29, 7.5, v => v / 2.8 - 2,
        { up: 'url(#upFill)', down: 'url(#downFill)', upWick: '#4f844f', downWick: '#95504f' });

    levels(g, [
        [22.5, 785, 843, dim, 1, '2 2', 'R3 1H'],
        [39, 686, 893, dim, 2, '', 'R3 4H'],
        [95.5, 545, 1166, '#8f8f12', 1, '2 2', ''],
        [116, 686, 843, dim, 1, '3 2', 'R3 2H'],
        [132, 545, 1166, white, 2, '3 2', 'Piv J'],
        [140, 686, 893, dim, 2, '', 'R2 4H'],
        [151.5, 0, w, white, 3, '4 3', 'Piv M'],
        [161, 785, 843, dim, 1, '2 2', 'R2 1H'],
        [178.5, 686, 843, red, 1, '3 2', 'R2 2H'],
        [264, 0, 1166, '#f00808', 2, '', 'mR1 H'],
        [266.5, 785, 843, dim, 1, '2 2', 'R1 1H'],
        [279.5, 686, 893, red, 1, '', 'R1 4H'],
        [298.5, 686, 843, red, 1, '3 2', 'R1 2H'],
        [324, 545, 1166, '#0cd60c', 2, '', 'mS1 J'],
        [360.5, 686, 843, white, 1, '3 2', 'Piv 2H'],
        [379.5, 686, 893, white, 1, '3 2', 'Piv 4H'],
        [405.5, 785, 843, white, 1, '2 2', 'Piv 1H'],
        [480.5, 686, 843, leaf, 1, '3 2', 'S1 2H'],
        [511, 785, 843, leaf, 1, '2 2', 'S1 1H'],
        [519.5, 686, 893, '#10c8d8', 1, '', 'S1 4H'],
        [516, 545, 1166, green, 2, '', 'S1 J'],
        [525.5, 545, 1166, '#a0a018', 1, '9 4', ''],
        [542.5, 686, 843, leaf, 1, '3 2', 'S2 2H'],
        [620, 686, 893, '#0aa6b4', 2, '', 'S2 4H'],
        [650.5, 785, 843, leaf, 1, '2 2', 'S2 1H'],
        [663.5, 686, 843, leaf, 1, '3 2', 'S3 2H'],
        [672.5, 0, 1166, white, 3, '4 3', 'Piv H'],
        [727, 0, 1166, green, 2, '', 'mS2 J'],
        [755.5, 785, 843, leaf, 1, '2 2', 'S3 1H'],
        [759.5, 686, 893, '#12c4d4', 1, '', 'S3 4H'],
        [937, 0, 1166, green, 2, '', 'S2 J']
    ]);
    el(g, 'text', { x: 1166, y: 93, fill: '#d6d616', 'text-anchor': 'end' }, 'Clo (J, Pré)');
    el(g, 'text', { x: 1166, y: 523, fill: '#c8d010', 'text-anchor': 'end' }, 'Clo J');

    lines(g, [
        ['#f00', '0,100 6,119 14,131 22,140 39,150 55,158 72,166 80,174 97,189 105,193 122,202 130,203 138,204'],
        ['#0f0', '138,204 155,203'],
        ['#f00', '155,203 163,203 180,204 188,207 204,208 214,212 230,214 246,215 271,216'],
        ['#0f0', '271,216 287,216'],
        ['#f00', '287,216 310,218 337,221 353,224 362,226 370,230 387,232 403,234 420,235 461,236'],
        ['#0f0', '461,236 486,235 520,233 635,233'],
        ['#f00', '635,233 640,266 644,322 652,323 660,324 669,332 677,360'],
        ['#0f0', '677,360 686,358'],
        ['#f00', '686,358 694,377 702,395 710,405 719,413'],
        ['#0f0', '719,413 727,409'],
        ['#f00', '727,409 736,410 744,412 753,418 769,429'],
        ['#0f0', '769,429 775,426 785,426'],
        ['#f00', '785,426 802,426 810,429 818,433']
    ], 2.5);

    // trade signals
    const at = ([x, y]) => [498 + x / 3, 178 + y / 3];
    arrows(g, [[538, 412], [662, 541], [587, 635], [737, 630], [787, 796], [763, 828], [612, 872], [812, 872]].map(at), '#f36a6a');
    squares(g, [[587, 998], [612, 1094], [662, 1061], [737, 998], [763, 1017], [787, 1050], [812, 1115], [937, 1069], [960, 1133]].map(at), '#45d545', 5);
    squares(g, [[551, 698], [600, 812], [675, 881], [626, 966], [825, 972], [750, 926], [800, 900]].map(at), '#f36a6a', 2);
    squares(g, [[574, 888], [600, 990], [649, 983], [725, 944], [775, 940], [800, 1042], [924, 977], [948, 1105]].map(at), '#45d545', 2);

    const dark = '#161a1c';
    tags(svg, w, [
        [95.5, '4 912,6', '#e0e020', dark, 8, 0, 29],
        [131.5, '4 908,4', '#eee', dark, 8, 0, 29],
        [151, '4 906,0', '#fff', dark, 11, 1, 38],
        [263.5, '4 892,8', '#f01010', dark, 10, 1, 35],
        [323.5, '4 885,7', '#10e010', dark, 8, 0, 29],
        [432.5, '4 872,9', '#d01010', dark, 8, 0, 29],
        [513, '4 863,0', '#10c010', dark, 8, 0, 29],
        [533, '4 861,5', '#d0b0a8', dark, 8, 0, 29]
    ]);
    tags(svg, w + 27, [[525, ',0', '#f0f020', dark, 11, 1, 11]]);
    tags(svg, w, [
        [525, '141T', '#111', '#80e880', 11, 1, 27],
        [672.5, '4 844,6', '#fff', dark, 10, 1, 35],
        [726.5, '4 838,2', '#10d010', dark, 8, 0, 29],
        [936, '4 813,5', '#10d010', dark, 8, 0, 29]
    ]);
    times(svg, h, [[30, '13:02'], [171, '15:06'], [337, '17:02'], [453, '19:16'], [495, '21:00'], [545, '07'], [586, '03:25'], [636, '07:01'], [686, '09:01'], [843, '11:13'], [893, '13:04'], [951, '15:14'], [1001, '17:06'], [1059, '19:16'], [1109, '21:07'], [1166, '09'], [1200, '01:00'], [1258, '03:10'], [1308, '05:01']]);
    el(svg, 'text', { x: 2, y: h - 1, fill: '#c01010', 'font-size': 6, 'font-style': 'italic' }, '© IT-Finance.com Données indicatives');
}

const hours = [[66, '06:00'], [121, '07:00'], [176, '08:00'], [231, '09:00'], [285, '10:00'], [340, '11:00'], [395, '12:00'], [450, '13:00']];

function drawSide() {
    const svg = document.getElementById('sideChart');
    const w = svg.clientWidth - 38, h = svg.clientHeight;
    gradient(svg, 'day', true, ['#cdcdcd', '#a0a0a0']);
    el(svg, 'rect', { width: w, height: h, fill: 'url(#day)' });
    [[12], ...hours].forEach(([x]) => el(svg, 'path', { d: `M${x}.5 0V${h}`, stroke: '#000', 'stroke-opacity': .1 }));
    for (let p = 4895; p >= 4850; p -= 5) {
        const y = 35.5 + (4895 - p) * 8.325;
        el(svg, 'path', { d: `M0 ${y}H${w}`, stroke: '#000', 'stroke-opacity': .1 });
        el(svg, 'text', { x: w + 3, y: y + 3, fill: '#222', 'font-weight': p % 50 ? 'normal' : 'bold' }, price(p));
    }

    const g = el(svg, 'g', {});
    el(g, 'rect', { x: 318, y: 307, width: w - 318, height: 7, fill: '#8cb68c' });
    el(g, 'path', { d: `M318 306.500H${w}`, stroke: '#10e810', 'stroke-width': 2 });
    el(g, 'path', { d: `M318 314.500H${w}`, stroke: '#f0c8c8' });
    const dots = '#0a7a14';
    levels(g, [
        [302, 0, w, '#0a6a12', 2, '', 'S1 J'],
        [113.5, 0, w, '#08701a', 1, '', 'mS1 J']
    ]);
    candles(g, sideBars, 3, 4.56, 3.6, v => v / 3 - 102,
        { up: '#17a81c', down: '#f4121c', upWick: '#2b7a32', downWick: '#c9303a' });
    levels(g, [
        [54, 0, w, '#f81010', 2, '', 'mR1 H'],
        [57.5, 285, 340, '#e03030', 1, '2 2', 'R1 1H'],
        [70, 231, 450, '#f23a3a', 2, '', 'R1 4H'],
        [88.5, 231, 340, '#f02020', 1, '3 2', 'R1 2H'],
        [149.5, 231, 340, '#111', 1, '3 2', 'Piv 2H'],
        [168.5, 231, 450, '#111', 1, '3 2', 'Piv 4H'],
        [193.5, 285, 340, '#333', 1, '2 2', 'Piv 1H'],
        [267.5, 231, 340, dots, 1, '3 2', 'S1 2H'],
        [297.5, 285, 340, dots, 1, '2 2', 'S1 1H'],
        [305.5, 231, 450, '#2020e0', 1, '', 'S1 4H'],
        [311, 0, w, '#f8f808', 2, '9 4', ''],
        [328.5, 231, 340, dots, 1, '3 2', 'S2 2H'],
        [404, 231, 450, '#3434e8', 2, '', 'S2 4H'],
        [433.5, 285, 340, dots, 1, '2 2', 'S2 1H'],
        [446.5, 231, 340, dots, 1, '3 2', 'S3 2H'],
        [455.5, 0, w, '#111', 3, '4 3', 'Piv H']
    ]);
    const px = pts => pts.split(' ').map(p => { const [x, y] = p.split(','); return `${x / 3 - 9},${y / 3 - 102}`; }).join(' ');
    lines(g, [
        ['#0f0', px('26,380 543,380')],
        ['#f00', px('543,380 552,560 557,640')],
        ['#0f0', px('557,640 569,636')],
        ['#f00', px('569,636 584,652')],
        ['#0f0', px('584,652 597,647 608,643')],
        ['#f00', px('608,643 625,644 652,648 679,656 695,668 710,710 721,750 734,800 748,855 775,905')],
        ['#0f0', px('775,905 790,897')],
        ['#f00', px('790,897 803,897 817,908 857,950 870,955')],
        ['#0f0', px('870,955 884,945')],
        ['#f00', px('884,945 912,946 940,948 953,953 967,962 980,967')]
    ], 2.5);
    const at = ([x, y]) => [x / 3 - 9, y / 3 - 102];
    arrows(g, [[721, 560], [734, 690], [775, 748], [871, 760], [817, 835], [748, 1048], [844, 996], [830, 1034], [857, 1071]].map(at), '#e04848');
    squares(g, [[735, 1195], [748, 1290], [775, 1257], [817, 1195], [844, 1248], [857, 1310], [953, 1210], [980, 1328]].map(at), '#28b428', 5);
    squares(g, [[741, 1013], [782, 1080], [755, 1163], [850, 1038], [878, 1170], [864, 1263], [727, 900]].map(at), '#e04848', 2);
    squares(g, [[727, 1088], [769, 1182], [741, 1188], [810, 1145], [947, 1176], [975, 1302]].map(at), '#28b428', 2);

    tags(svg, w, [
        [54.5, '4 892,8', '#f01010', '#999', 10, 1, 34],
        [220, '4 872,9', '#f02020', '#999', 8, 0, 29],
        [303, '4 863,0', '#10e010', '#999', 8, 0, 29],
        [319, '4 861,5', '#f0c8c8', '#999', 8, 0, 29],
        [311, '1m27s', '#111', '#80e880', 11, 1, 36],
        [455.5, '4 844,6', '#111', '#999', 10, 1, 34]
    ]);
    el(svg, 'text', { x: 1, y: h - 2, fill: '#f02020', 'font-size': 6, 'font-style': 'italic' }, '© IT-Finance.com Données indicatives');
}

function drawRsi() {
    const svg = document.getElementById('rsiChart');
    const w = svg.clientWidth - 38, h = svg.clientHeight - 13;
    const top = 8, unit = 1.603;
    const y = v => top + (100 - v) * unit;
    gradient(svg, 'rsiBg', true, ['#a8a8a8', '#969696']);
    el(svg, 'rect', { width: w, height: h, fill: 'url(#rsiBg)' });
    [[12], ...hours].forEach(([x]) => el(svg, 'path', { d: `M${x}.5 0V${h}`, stroke: '#000', 'stroke-opacity': .1 }));
    for (let v = 100; v > 0; v -= 10) {
        el(svg, 'path', { d: `M0 ${y(v)}H${w}`, stroke: '#000', 'stroke-opacity': .1 });
        if (v !== 40 && v !== 30) el(svg, 'text', { x: w + 3, y: y(v) + 3, fill: '#222', 'font-weight': v % 50 ? 'normal' : 'bold' }, v);
    }

    const slow = '388 390 384 386 398 380 374 392 413 420 422 385 372 380 377 364 358 352 338 334 333 318 302 306 307 308 325 343 342 346 349 343 315 285 260 260 274 274 290 302 316 302 306 311 306 314 318 319 324 350 354 372 412 385 352 320 336 360 373 374 384 340 315 330 328 318 334 350 360 364';
    const fast = '391 394 384 388 405 380 372 402 425 434 437 384 366 376 372 354 347 339 316 312 312 285 268 274 277 278 310 338 336 346 350 338 298 246 221 224 250 246 275 297 316 293 300 308 300 314 322 322 336 370 372 396 443 400 362 318 335 362 383 384 397 340 299 328 324 312 328 351 367 372';
    const pts = s => s.split(' ').map((v, i) => [3 + i * 4.56, v / 3 - 14]);
    const mid = y(50);
    const area = `M0 ${mid}V115L` + pts(slow).map(p => p.join(' ')).join('L') + `V${mid}z`;
    [['under', mid, h - mid, '#cc5f5f'], ['over', 0, mid, '#5fcc5f']].forEach(([id, top, height, fill]) => {
        const clip = el(svg, 'clipPath', { id });
        el(clip, 'rect', { x: 0, y: top, width: w, height });
        el(svg, 'path', { d: area, fill, 'clip-path': `url(#${id})` });
    });
    levels(svg, [
        [8, 0, w, '#0f0', 2, ''],
        [56.5, 0, w, '#1ee01e', 1, '3 2'],
        [88.5, 0, w, '#eee', 1, '2 2'],
        [120.5, 0, w, '#f01020', 1, '3 2'],
        [168, 0, w, '#f00', 2, '']
    ]);
    [[slow, '#222', 1.5], [fast, '#dede3a', 1]].forEach(([s, color, sw]) => {
        const p = pts(s);
        lines(svg, [[color, '0,116 ' + p.map(q => q.join(',')).join(' ')]], sw);
        squares(svg, p, color, 2);
    });
    tags(svg, w, [
        [102, '38,182', '#111', '#999', 11, 1, 34],
        [115, '36,409', '#f0f010', '#999', 10, 1, 32]
    ]);
    times(svg, h, hours);
}

const colors = ['#fff', '#ccc', '#aaa', '#999', '#222', '#b8ccf8', '#58a0f8', '#2030d8', '#3038e0', '#2020b0', '#7818c0', '#f880c0',
    '#f0c0c0', '#e02020', '#e05030', '#904018', '#f08040', '#f8a878', '#f8f000', '#80f0e0', '#50f080', '#30e040', '#40c040', '#208820'];
colors.forEach(c => {
    const swatch = document.createElement('span');
    swatch.style.background = c;
    document.getElementById('palette').appendChild(swatch);
});

drawMain();
drawSide();
drawRsi();
```
